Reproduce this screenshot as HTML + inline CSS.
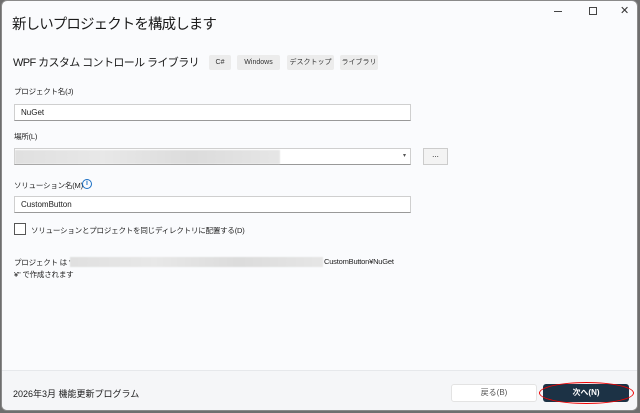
<!DOCTYPE html>
<html><head><meta charset="utf-8"><style>
*{box-sizing:border-box;margin:0;padding:0}
body{width:640px;height:413px;background:#6e6e6e;position:relative;overflow:hidden;font-family:"Liberation Sans","Noto Sans CJK JP",sans-serif;color:#1b1b1b}
.win{position:absolute;left:1px;top:0;width:637px;height:411px;background:#fafbfd;border-radius:6px;overflow:hidden;border:1px solid #8a8a8a}
.abs{position:absolute;white-space:nowrap}
.title{left:10px;top:12px;font-size:14.5px;letter-spacing:-0.9px;color:#1b1b1b}
.sub{left:11px;top:53px;font-size:11px;letter-spacing:-0.6px}
.tag{top:54px;height:15px;background:#ececec;border-radius:2px;font-size:7px;line-height:15px;text-align:center;color:#333}
.lbl{font-size:7.5px;color:#222;letter-spacing:-0.2px}
.inp{background:#fff;border:1px solid #cfcfcf;border-bottom:1px solid #999;height:17px;font-size:8px;line-height:15px;padding-left:6px}
.blur{background:linear-gradient(90deg,#e0e0e0,#e8e8e8,#dcdcdc,#e6e6e6);filter:blur(0.5px)}
.foot{left:0;top:369px;width:637px;height:42px;background:#f5f6f8;border-top:1px solid #e6e8eb}
</style></head><body>
<div class="win">
<div class="abs title">新しいプロジェクトを構成します</div>
<div class="abs" style="left:552px;top:10px;width:8px;height:1px;background:#444"></div>
<div class="abs" style="left:587px;top:6px;width:8px;height:8px;border:1px solid #444"></div>
<div class="abs" style="left:618px;top:3px;font-size:11px;color:#333">✕</div>
<div class="abs sub">WPF カスタム コントロール ライブラリ</div>
<div class="abs tag" style="left:207px;width:22px">C#</div>
<div class="abs tag" style="left:235px;width:43px">Windows</div>
<div class="abs tag" style="left:285px;width:47px">デスクトップ</div>
<div class="abs tag" style="left:338px;width:38px">ライブラリ</div>
<div class="abs lbl" style="left:12px;top:85px">プロジェクト名(J)</div>
<div class="abs inp" style="left:12px;top:103px;width:397px">NuGet</div>
<div class="abs lbl" style="left:12px;top:130px">場所(L)</div>
<div class="abs inp" style="left:12px;top:147px;width:397px"><div class="abs blur" style="left:0;top:1px;width:265px;height:14px"></div><span class="abs" style="right:4px;top:0;font-size:6px;color:#555">▾</span></div>
<div class="abs" style="left:421px;top:147px;width:25px;height:17px;background:#f3f3f3;border:1px solid #ccc;font-size:8px;text-align:center;line-height:12px">...</div>
<div class="abs lbl" style="left:12px;top:179px">ソリューション名(M)</div>
<div class="abs" style="left:80px;top:178px;width:10px;height:10px;border:1px solid #1a6fc4;border-radius:50%;font-size:7px;color:#1a6fc4;text-align:center;line-height:8px;font-weight:bold">i</div>
<div class="abs inp" style="left:12px;top:195px;width:397px">CustomButton</div>
<div class="abs" style="left:12px;top:222px;width:12px;height:12px;border:1px solid #555;background:#fff"></div>
<div class="abs lbl" style="left:29px;top:224px">ソリューションとプロジェクトを同じディレクトリに配置する(D)</div>
<div class="abs lbl" style="left:12px;top:256px">プロジェクト は "</div>
<div class="abs blur" style="left:68px;top:256px;width:253px;height:10px"></div>
<div class="abs lbl" style="left:322px;top:256px">CustomButton¥NuGet</div>
<div class="abs lbl" style="left:12px;top:268px">¥" で作成されます</div>
<div class="abs foot">
<div class="abs" style="left:11px;top:16px;font-size:9px">2026年3月 機能更新プログラム</div>
<div class="abs" style="left:449px;top:13px;width:86px;height:18px;background:#fff;border:1px solid #e3e3e3;border-radius:3px;font-size:8px;color:#555;text-align:center;line-height:16px">戻る(B)</div>
<div class="abs" style="left:541px;top:13px;width:86px;height:18px;background:#1c3245;border-radius:3px;font-size:8px;color:#fff;text-align:center;line-height:18px;font-weight:bold">次へ(N)</div>
<div class="abs" style="left:537px;top:11px;width:95px;height:22px;border:1.5px solid #e00;border-radius:50%"></div>
</div>
</div>
</body></html>
